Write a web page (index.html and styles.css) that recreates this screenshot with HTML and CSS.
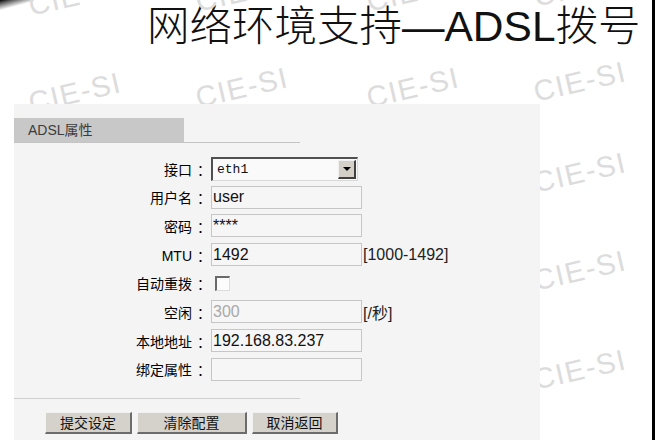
FILE: index.html
```html
<!DOCTYPE html>
<html lang="zh-CN">
<head>
<meta charset="utf-8">
<title>网络环境支持—ADSL拨号</title>
<link rel="stylesheet" href="styles.css">
</head>
<body>
<div class="slide">
  <div class="corner"></div>
  <div class="wm wm-a">CIE-SI</div>
  <div class="wm wm-b">CIE-SI</div>
  <div class="wm wm-c">CIE-SI</div>
  <div class="wm wm-d">CIE-SI</div>
  <div class="wm wm-e">CIE-SI</div>
  <div class="wm wm-f">CIE-SI</div>
  <div class="wm wm-g">CIE-SI</div>
  <div class="wm wm-h">CIE-SI</div>
  <div class="wm wm-i">CIE-SI</div>
  <div class="wm wm-j">CIE-SI</div>
  <div class="wm wm-k">CIE-SI</div>

  <h1 class="title">网络环境支持—ADSL拨号</h1>

  <div class="panel">
    <div class="tabbar"><div class="tab">ADSL属性</div></div>

    <div class="form">
      <label class="lbl">接口<span class="colon">：</span></label>
      <div class="select"><span class="sel-text">eth1</span><span class="sel-btn"><span class="tri"></span></span></div>
      <span class="unit"></span>

      <label class="lbl">用户名<span class="colon">：</span></label>
      <input class="field" type="text" value="user">
      <span class="unit"></span>

      <label class="lbl">密码<span class="colon">：</span></label>
      <input class="field" type="text" value="****">
      <span class="unit"></span>

      <label class="lbl">MTU<span class="colon">：</span></label>
      <input class="field" type="text" value="1492">
      <span class="unit">[1000-1492]</span>

      <label class="lbl">自动重拨<span class="colon">：</span></label>
      <div class="check-cell"><span class="check"></span></div>
      <span class="unit"></span>

      <label class="lbl">空闲<span class="colon">：</span></label>
      <input class="field disabled" type="text" value="300">
      <span class="unit">[/秒]</span>

      <label class="lbl">本地地址<span class="colon">：</span></label>
      <input class="field" type="text" value="192.168.83.237">
      <span class="unit"></span>

      <label class="lbl">绑定属性<span class="colon">：</span></label>
      <input class="field" type="text" value="">
      <span class="unit"></span>
    </div>

    <div class="rule"></div>

    <div class="buttons">
      <button class="btn btn-1">提交设定</button>
      <button class="btn btn-2">清除配置</button>
      <button class="btn btn-3">取消返回</button>
    </div>
  </div>
</div>
</body>
</html>
```
FILE: styles.css
```css
html, body {
  margin: 0;
  padding: 0;
  background: #fff;
}

.slide {
  position: relative;
  width: 652px;
  height: 440px;
  border-right: 3px solid #000;
  overflow: hidden;
  background: #fff;
  font-family: "Liberation Sans", "Noto Sans CJK SC", sans-serif;
}

.corner {
  position: absolute;
  left: 0;
  top: 0;
  width: 34px;
  height: 10px;
  background: linear-gradient(165deg, #000 0%, rgba(0,0,0,0.6) 20%, rgba(0,0,0,0) 55%);
}

.title {
  margin: 0;
  padding: 4px 0 0 147px;
  height: 46px;
  font-size: 42.5px;
  line-height: 46px;
  font-weight: 300;
  color: #111;
  font-family: "Liberation Sans", "Noto Sans CJK SC", sans-serif;
  white-space: nowrap;
}

/* watermarks */
.wm {
  position: absolute;
  font-family: "Liberation Sans", sans-serif;
  font-size: 29px;
  letter-spacing: 1.5px;
  color: #dcdcdc;
  transform: translate(-50%, -50%) rotate(-13deg);
  white-space: nowrap;
}
.wm-a { left: 75px;  top: 93px; }
.wm-b { left: 242px; top: 88px; }
.wm-c { left: 413px; top: 88px; }
.wm-d { left: 580px; top: 82px; }
.wm-e { left: 580px; top: 173px; }
.wm-f { left: 580px; top: 271px; }
.wm-g { left: 580px; top: 370px; }
.wm-h { left: 75px;  top: -4px; }
.wm-i { left: 242px; top: -8px; }
.wm-j { left: 413px; top: -8px; }
.wm-k { left: 580px; top: -13px; }

/* panel */
.panel {
  position: relative;
  z-index: 1;
  margin: 54px 0 0 14px;
  width: 526px;
  height: 336px;
  background: #f4f4f4;
  padding-top: 14px;
  box-sizing: border-box;
}

.tabbar {
  width: 286px;
  border-bottom: 1px solid #c4c4c4;
}
.tab {
  width: 156px;
  height: 24px;
  padding-left: 14px;
  background: #c8c8c8;
  font-size: 14px;
  line-height: 24px;
  color: #3c3c3c;
  font-family: "Liberation Sans", "Noto Sans CJK SC", sans-serif;
}

.form {
  margin-top: 14px;
  display: grid;
  grid-template-columns: 197px 151px auto;
  grid-auto-rows: 23px;
  row-gap: 5.7px;
  column-gap: 0;
}

.lbl {
  align-self: center;
  text-align: right;
  padding-right: 5px;
  font-size: 14px;
  color: #000;
  font-family: "Liberation Sans", "Noto Sans CJK SC", sans-serif;
  white-space: nowrap;
}
.colon {
  display: inline-block;
  padding-left: 5px;
  margin-right: -5px;
}

.field {
  box-sizing: border-box;
  width: 151px;
  height: 23px;
  margin: 0;
  padding: 0 2px 0 1px;
  border: 1px solid #c6c6c6;
  background: #f6f6f6;
  font-family: "Liberation Sans", "Noto Sans CJK SC", sans-serif;
  font-size: 16px;
  color: #111;
  outline: none;
}
.field.disabled {
  color: #a9a9a9;
}

.unit {
  align-self: center;
  padding-left: 1px;
  font-size: 16px;
  color: #222;
  font-family: "Liberation Sans", "Noto Sans CJK SC", sans-serif;
  white-space: nowrap;
}

.select {
  box-sizing: border-box;
  width: 147px;
  height: 24px;
  border-style: solid;
  border-width: 2px 1px 1px 2px;
  border-color: #505050 #d8d8d8 #d8d8d8 #505050;
  background: #fafafa;
  display: flex;
  align-items: center;
  justify-content: space-between;
  padding: 0 1px 0 4px;
}
.sel-text {
  font-family: "Liberation Mono", monospace;
  font-size: 13px;
  color: #111;
}
.sel-btn {
  box-sizing: border-box;
  width: 18px;
  height: 19px;
  background: #d4d0c8;
  border-style: solid;
  border-width: 1px 2px 2px 1px;
  border-color: #f0f0f0 #404040 #404040 #f0f0f0;
  display: flex;
  align-items: center;
  justify-content: center;
}
.tri {
  width: 0;
  height: 0;
  border-left: 4px solid transparent;
  border-right: 4px solid transparent;
  border-top: 4px solid #000;
}

.check-cell {
  display: flex;
  align-items: center;
  padding-left: 4px;
}
.check {
  box-sizing: border-box;
  width: 15px;
  height: 15px;
  border-style: solid;
  border-width: 2px 1px 1px 2px;
  border-color: #6a6a6a #dcdcdc #dcdcdc #6a6a6a;
  background: #fcfcfc;
}

.rule {
  margin-top: 17px;
  width: 286px;
  border-top: 1px solid #cfcfcf;
}

.buttons {
  display: flex;
  gap: 5px;
  margin: 13px 0 0 31px;
}
.btn {
  box-sizing: border-box;
  height: 22px;
  margin: 0;
  padding: 0;
  background: #d5d2cb;
  border-style: solid;
  border-width: 1px 2px 2px 1px;
  border-color: #f2f2f2 #6c6c6c #6c6c6c #f2f2f2;
  font-family: "Noto Sans CJK SC", sans-serif;
  font-size: 14px;
  line-height: 18px;
  color: #111;
}
.btn-1 { width: 87px; }
.btn-2 { width: 110px; }
.btn-3 { width: 86px; }
```
